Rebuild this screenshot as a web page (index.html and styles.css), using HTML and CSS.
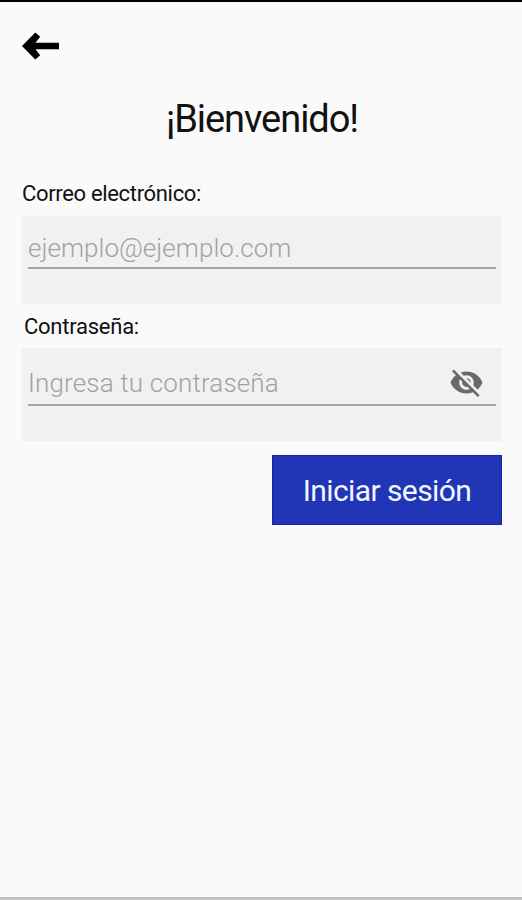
FILE: index.html
```html
<!DOCTYPE html>
<html lang="es">
<head>
<meta charset="utf-8">
<title>Iniciar sesión</title>
<link rel="stylesheet" href="styles.css">
</head>
<body>
<main class="screen">
  <a class="back" aria-label="Volver">
    <svg width="38" height="28" viewBox="0 0 38 28"><path d="M0 14 13.300 .5l4.900 4.300-4.700 6H37v6.400H13.500l4.700 6-4.900 4.300z"/></svg>
  </a>
  <h1 class="title">¡Bienvenido!</h1>
  <form class="form">
    <label class="label" for="email">Correo electrónico:</label>
    <div class="field">
      <div class="line line-email"><input class="input input-email" id="email" type="email" placeholder="ejemplo@ejemplo.com"></div>
    </div>
    <label class="label label-password" for="password">Contraseña:</label>
    <div class="field field-password">
      <div class="line line-password">
        <input class="input input-password" id="password" type="password" placeholder="Ingresa tu contraseña">
        <svg class="eye" width="35" height="35" viewBox="0 0 24 24"><path d="M12 7c2.760 0 5 2.240 5 5 0 .650-.130 1.260-.360 1.830l2.920 2.920c1.510-1.260 2.700-2.890 3.430-4.750-1.730-4.390-6-7.500-11-7.500-1.400 0-2.740.250-3.980.700l2.160 2.160C10.740 7.130 11.350 7 12 7zM2 4.270l2.280 2.280.460.460C3.080 8.300 1.780 10.020 1 12c1.730 4.390 6 7.500 11 7.500 1.550 0 3.030-.300 4.380-.840l.420.420L19.730 22 21 20.730 3.270 3 2 4.270zM7.530 9.800l1.550 1.550c-.050.210-.080.430-.080.650 0 1.660 1.340 3 3 3 .220 0 .440-.030.650-.080l1.550 1.550c-.670.330-1.410.530-2.200.530-2.760 0-5-2.240-5-5 0-.790.200-1.530.530-2.200zm4.310-.780l3.150 3.150.020-.160c0-1.660-1.340-3-3-3l-.170.010z"/></svg>
      </div>
    </div>
    <button class="submit" type="button">Iniciar sesión</button>
  </form>
</main>
</body>
</html>
```

FILE: styles.css
```css
* { box-sizing: border-box; }
body { margin: 0; background: #fafafa; font-family: Roboto, sans-serif; color: #111; }
.screen {
  display: flex;
  flex-direction: column;
  height: 900px;
  padding: 30px 20px 0 22px;
  border-top: 2px solid #000;
  border-bottom: 3px solid #c2c2c2;
}
.back { display: block; height: 28px; }
.back svg { display: block; }
.title {
  margin: 36px 0 0;
  height: 47px;
  font-size: 38px;
  line-height: 46px;
  font-weight: 400;
  text-align: center;
  letter-spacing: -1.05px;
}
.form { display: flex; flex-direction: column; padding-top: 38px; }
.label { height: 35px; font-size: 22px; line-height: 26px; letter-spacing: -0.33px; }
.label-password { height: 34px; margin-top: 10px; padding-left: 2px; letter-spacing: -0.25px; }
.field { height: 88px; padding: 0 6px; background: #f1f1f1; }
.field-password { height: 93px; }
.line { display: flex; align-items: center; border-bottom: 2px solid #a4a4a4; }
.line-email { height: 53px; padding-top: 13px; }
.line-password { height: 58px; padding: 13px 12px 0 0; }
.input {
  flex: 1;
  min-width: 0;
  height: 38px;
  padding: 0;
  border: 0;
  outline: 0;
  background: transparent;
  font: 300 26px/38px Roboto, sans-serif;
  letter-spacing: 0.05px;
}
.input-password { letter-spacing: 0.15px; }
.input::placeholder { color: #a2a2a2; opacity: 1; }
.eye { fill: #696969; }
.submit {
  align-self: flex-end;
  width: 230px;
  height: 70px;
  margin-top: 14px;
  padding: 2px 0 0;
  border: 1px solid #1428a4;
  background: #2036b6;
  color: #f3f5ff;
  font: 400 30px/66px Roboto, sans-serif;
  letter-spacing: -0.6px;
}
```
